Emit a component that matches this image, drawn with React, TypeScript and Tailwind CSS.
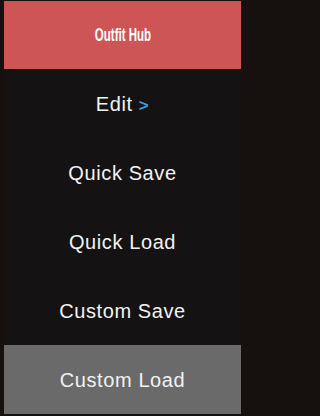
import React from "react";

const items = [
  { label: "Edit", arrow: true },
  { label: "Quick Save" },
  { label: "Quick Load" },
  { label: "Custom Save" },
  { label: "Custom Load", active: true },
];

export default function App() {
  return (
    <div className="h-[416px] w-full overflow-hidden bg-[#16110f] pt-[1px] pl-[4px]">
      <div className="w-[237px] bg-[#141213]">
        {/* Header */}
        <div className="flex h-[68px] items-center justify-center bg-[#cd5555]">
          <span className="inline-block scale-x-[0.64] text-[18px] font-bold text-white [font-family:'Liberation_Sans',sans-serif]">
            Outfit Hub
          </span>
        </div>

        {items.map((item) => (
          <div
            key={item.label}
            className={`flex h-[69px] items-center justify-center ${
              item.active ? "bg-[#6a6a6a]" : "bg-[#141213]"
            }`}
          >
            <span className="text-[20px] tracking-[0.6px] text-[#f2f2f2] [font-family:'Liberation_Sans',sans-serif]">
              {item.label}
              {item.arrow && (
                <span className="ml-[6px] text-[17px] font-bold text-[#3b9fde]">&gt;</span>
              )}
            </span>
          </div>
        ))}
      </div>
    </div>
  );
}
